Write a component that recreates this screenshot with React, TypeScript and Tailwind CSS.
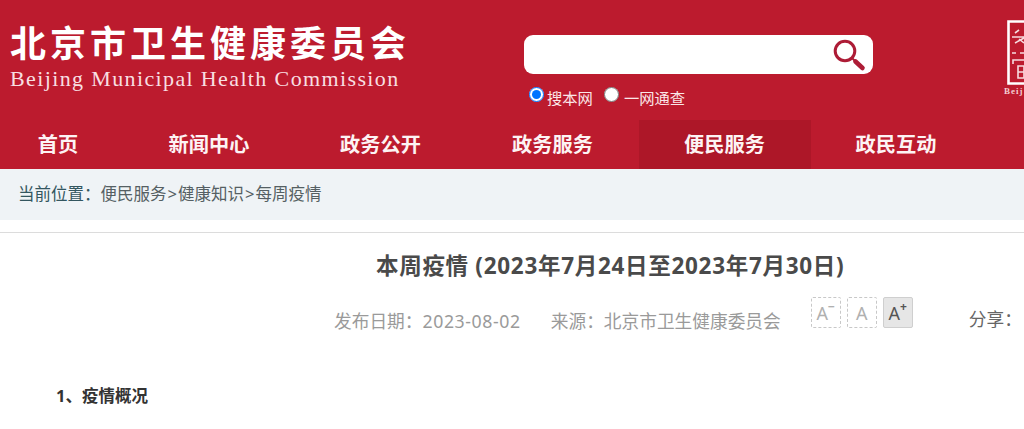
const navItems = ["首页", "新闻中心", "政务公开", "政务服务", "便民服务", "政民互动"];

const navClasses = [
  "w-[123px] pr-[7px] text-center",
  "w-[172px] text-center",
  "w-[172px] pr-[1px] text-center",
  "w-[172px] pr-[1px] text-center",
  "w-[172px] bg-[#ad1728] pr-[1px] text-center",
  "w-[172px] pr-[2px] text-center",
];

function SearchIcon() {
  return (
    <svg width="34" height="34" viewBox="0 0 34 34" fill="none">
      <circle cx="13" cy="13" r="9.8" stroke="#ad1c36" strokeWidth="3" fill="#fff" />
      <path d="M20.5 20.5 L23.5 23.5" stroke="#ad1c36" strokeWidth="2" />
      <path d="M23.5 23.5 L30.5 30" stroke="#ad1c36" strokeWidth="4.6" strokeLinecap="round" />
    </svg>
  );
}

function Emblem() {
  return (
    <svg width="17" height="66" viewBox="0 0 17 66" fill="none" className="shrink-0">
      <path d="M17 1.5 H1.5 V63.5 H17" stroke="#fff" strokeWidth="2.6" />
      <path d="M8 13 L12 10 M5 17 H17 M8 23 L17 18 M12 19 L17 23" stroke="#f6dcdf" strokeWidth="1.6" />
      <path d="M5 33 H9 M13 33 H17" stroke="#f6dcdf" strokeWidth="1.4" />
      <path d="M6 44 V40 H17 M11 46 H17 V58 H11 Z M11 52 H17" stroke="#f6dcdf" strokeWidth="1.6" />
    </svg>
  );
}

function FontButton({ sign, active }: { sign: string; active?: boolean }) {
  return (
    <div
      className={
        active
          ? "flex h-[31px] w-[30px] items-start justify-center rounded-[2px] border border-[#cfcfcf] bg-[#e6e6e6] pt-[3px] text-[#555]"
          : "flex h-[31px] w-[30px] items-start justify-center rounded-[2px] border border-dashed border-[#c8c8c8] pt-[3px] text-[#b0b0b0]"
      }
    >
      <span className="text-[18px] leading-[24px]">A</span>
      <span className="-mt-[1px] text-[12px] font-bold leading-[14px]">{sign}</span>
    </div>
  );
}

export default function App() {
  return (
    <div className="h-[429px] w-[1024px] overflow-hidden bg-white font-['Noto_Sans','Noto_Sans_CJK_SC',sans-serif]">
      <header className="h-[169px] bg-[#bc1b2e]">
        <div className="flex h-[120px]">
          <div className="w-[524px] shrink-0 pl-[10px] pt-[22px] text-white">
            <div className="whitespace-nowrap text-[36px] font-bold leading-[44px] tracking-[4px]">
              北京市卫生健康委员会
            </div>
            <div className="whitespace-nowrap font-['Liberation_Serif',serif] text-[22px] leading-[25px] tracking-[1.37px] text-[#f8dfe2]">
              Beijing Municipal Health Commission
            </div>
          </div>
          <div className="w-[483px] shrink-0 pt-[35px]">
            <div className="flex h-[39px] w-[349px] items-center justify-end rounded-[9px] bg-white pr-[7px]">
              <SearchIcon />
            </div>
            <div className="mt-[11px] flex items-start pl-[4px] text-[15.3px] leading-[20px] text-[#fbe6e8]">
              <input type="radio" name="scope" defaultChecked className="mt-[2px] ml-[1px] h-[15px] w-[15px]" />
              <span className="mt-[3px] ml-[3px]">搜本网</span>
              <input type="radio" name="scope" className="mt-[2px] ml-[11px] h-[15px] w-[15px]" />
              <span className="mt-[3px] ml-[5px]">一网通查</span>
            </div>
          </div>
          <div className="relative pt-[20px]">
            <Emblem />
            <div className="absolute top-[86px] left-[-3px] font-['Liberation_Serif',serif] text-[9px] leading-[10px] font-bold tracking-[1px] text-[#f3cdd2]">
              Beij
            </div>
          </div>
        </div>
        <nav className="flex h-[49px] text-[20.2px] leading-[49px] font-bold text-[#fdf3f4]">
          {navItems.map((item, i) => (
            <div key={item} className={navClasses[i]}>
              {item}
            </div>
          ))}
        </nav>
      </header>

      <div className="flex h-[51px] items-center bg-[#eff3f6] pl-[18px] text-[16.5px] whitespace-nowrap text-[#555f63]">
        <span className="text-[#33565f]">当前位置：</span>
        <span>便民服务</span>
        <span className="px-[1px]">&gt;</span>
        <span>健康知识</span>
        <span className="px-[1px]">&gt;</span>
        <span>每周疫情</span>
      </div>

      <div className="mt-[12px] border-t border-[#dcdcdc]">
        <h1 className="mt-[18px] pl-[376px] text-[22.5px] leading-[30px] font-bold tracking-[0.7px] whitespace-nowrap text-[#4a4a4a]">
          本周疫情 (2023年7月24日至2023年7月30日)
        </h1>
        <div className="mt-[16px] flex h-[36px] items-start text-[17.7px] whitespace-nowrap text-[#9a9a9a]">
          <span className="mt-[12px] ml-[334px] leading-[24px]">
            发布日期：<span className="tracking-[0.6px]">2023-08-02</span>
          </span>
          <span className="mt-[12px] ml-[30px] leading-[24px]">来源：北京市卫生健康委员会</span>
          <div className="ml-[30px] flex gap-[6px]">
            <FontButton sign="−" />
            <FontButton sign="" />
            <FontButton sign="+" active />
          </div>
          <span className="mt-[10px] ml-[56px] leading-[24px] text-[#666]">分享：</span>
        </div>
        <p className="mt-[51px] pl-[56px] text-[16.5px] leading-[24px] font-bold text-[#333]">1、疫情概况</p>
      </div>
    </div>
  );
}
